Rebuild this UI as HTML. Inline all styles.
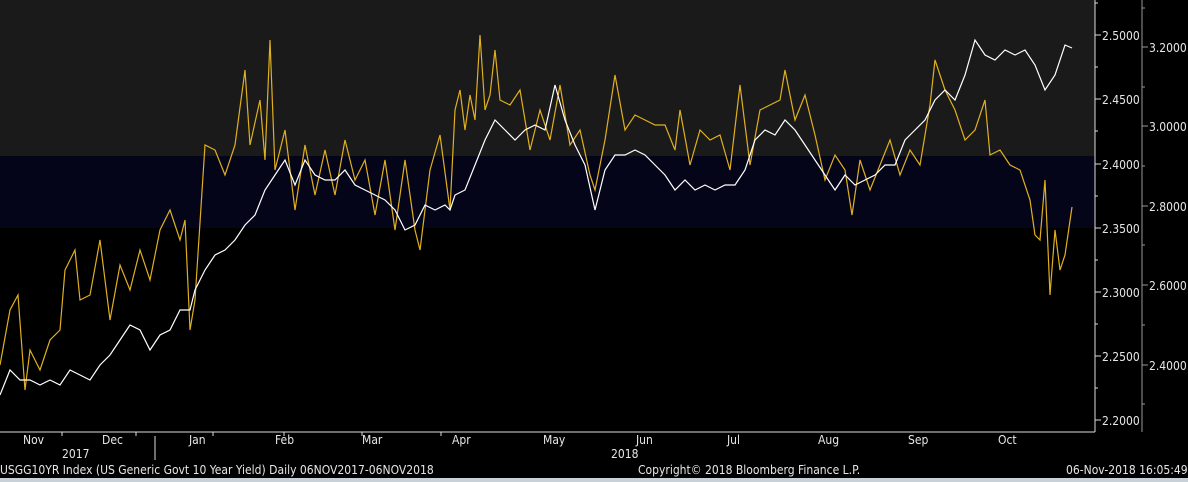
<!DOCTYPE html>
<html><head><meta charset="utf-8"><style>
body{margin:0;width:1188px;height:482px;background:#000;overflow:hidden;font-family:"DejaVu Sans Condensed","Liberation Sans",sans-serif;}
svg{display:block}
text{fill:#e6e6e6;font-size:12px;font-family:"DejaVu Sans Condensed","Liberation Sans",sans-serif;font-stretch:condensed}
</style></head><body>
<svg width="1188" height="482" viewBox="0 0 1188 482">
<rect x="0" y="0" width="1188" height="482" fill="#000"/>
<rect x="0" y="0" width="1095" height="156" fill="#1a1a1a"/>
<rect x="0" y="156" width="1095" height="72" fill="#05051a"/>
<!-- left axis -->
<line x1="1095" y1="0" x2="1095" y2="432" stroke="#ddd" stroke-width="1"/>
<line x1="0" y1="432" x2="1095" y2="432" stroke="#ddd"/>
<g stroke="#ddd">
<line x1="1095" y1="35" x2="1101" y2="35"/><line x1="1095" y1="99" x2="1101" y2="99"/><line x1="1095" y1="164" x2="1101" y2="164"/><line x1="1095" y1="228" x2="1101" y2="228"/><line x1="1095" y1="292" x2="1101" y2="292"/><line x1="1095" y1="356" x2="1101" y2="356"/><line x1="1095" y1="420" x2="1101" y2="420"/>
<line x1="1095" y1="3" x2="1098" y2="3"/><line x1="1095" y1="67" x2="1098" y2="67"/><line x1="1095" y1="131" x2="1098" y2="131"/><line x1="1095" y1="196" x2="1098" y2="196"/><line x1="1095" y1="260" x2="1098" y2="260"/><line x1="1095" y1="324" x2="1098" y2="324"/><line x1="1095" y1="388" x2="1098" y2="388"/>
</g>
<g><text x="1102" y="40">2.5000</text><text x="1102" y="104">2.4500</text><text x="1102" y="169">2.4000</text><text x="1102" y="233">2.3500</text><text x="1102" y="297">2.3000</text><text x="1102" y="361">2.2500</text><text x="1102" y="425">2.2000</text></g>
<!-- right axis -->
<line x1="1142" y1="0" x2="1142" y2="432" stroke="#999"/>
<g stroke="#999">
<line x1="1142" y1="47" x2="1148" y2="47"/><line x1="1142" y1="126" x2="1148" y2="126"/><line x1="1142" y1="206" x2="1148" y2="206"/><line x1="1142" y1="285" x2="1148" y2="285"/><line x1="1142" y1="365" x2="1148" y2="365"/>
<line x1="1142" y1="8" x2="1145" y2="8"/><line x1="1142" y1="87" x2="1145" y2="87"/><line x1="1142" y1="166" x2="1145" y2="166"/><line x1="1142" y1="245" x2="1145" y2="245"/><line x1="1142" y1="325" x2="1145" y2="325"/><line x1="1142" y1="404" x2="1145" y2="404"/>
</g>
<g><text x="1149" y="52">3.2000</text><text x="1149" y="131">3.0000</text><text x="1149" y="211">2.8000</text><text x="1149" y="290">2.6000</text><text x="1149" y="370">2.4000</text></g>
<!-- x axis ticks & labels -->
<g stroke="#ddd"><line x1="62" y1="432" x2="62" y2="436"/><line x1="136" y1="432" x2="136" y2="436"/><line x1="213" y1="432" x2="213" y2="436"/><line x1="284" y1="432" x2="284" y2="436"/><line x1="362" y1="432" x2="362" y2="436"/><line x1="441" y1="432" x2="441" y2="436"/><line x1="155" y1="436" x2="155" y2="460"/></g>
<g><text x="23" y="444">Nov</text><text x="102" y="444">Dec</text><text x="189" y="444">Jan</text><text x="275" y="444">Feb</text><text x="362" y="444">Mar</text><text x="452" y="444">Apr</text><text x="543" y="444">May</text><text x="636" y="444">Jun</text><text x="727" y="444">Jul</text><text x="818" y="444">Aug</text><text x="908" y="444">Sep</text><text x="998" y="444">Oct</text>
<text x="62" y="458">2017</text><text x="611" y="458">2018</text>
<text x="0" y="474">USGG10YR Index (US Generic Govt 10 Year Yield)  Daily 06NOV2017-06NOV2018</text>
<text x="638" y="474">Copyright© 2018 Bloomberg Finance L.P.</text>
<text x="1066" y="474">06-Nov-2018 16:05:49</text></g>
<rect x="0" y="478" width="1188" height="4" fill="#c8d0d8"/>
<polyline fill="none" stroke="#e0b020" stroke-width="1.2" points="0,365 10,310 18,295 25,390 30,350 40,370 50,340 60,330 65,270 75,250 80,300 90,295 100,240 110,320 120,265 130,290 140,250 150,280 160,230 170,210 180,240 185,220 190,330 195,300 205,145 215,150 225,175 235,145 245,70 250,145 260,100 265,160 270,40 275,170 285,130 295,210 305,145 315,195 325,150 335,195 345,140 355,180 365,160 375,215 385,160 395,230 405,160 415,230 420,250 430,170 440,135 450,210 455,110 460,90 465,130 470,95 475,120 480,35 485,110 490,95 495,50 500,100 510,105 520,90 530,150 540,110 550,140 560,85 570,145 580,130 590,175 595,190 605,140 615,75 625,130 635,115 645,120 655,125 665,125 675,150 680,110 690,165 700,130 710,140 720,135 730,170 740,85 750,165 760,110 770,105 780,100 785,70 795,120 805,95 815,135 825,180 835,155 845,170 852,215 860,160 870,190 880,165 890,140 900,175 910,150 920,165 930,105 935,60 945,90 955,110 965,140 975,130 985,100 990,155 1000,150 1010,165 1020,170 1030,200 1035,235 1040,240 1045,180 1050,295 1055,230 1060,270 1065,255 1072,207"/>
<polyline fill="none" stroke="#ffffff" stroke-width="1.2" points="0,395 10,370 20,380 30,380 40,385 50,380 60,385 70,370 80,375 90,380 100,365 110,355 120,340 130,325 140,330 150,350 160,335 170,330 180,310 190,310 195,290 205,270 215,255 225,250 235,240 245,225 255,215 265,190 275,175 285,160 295,185 305,160 315,175 325,180 335,180 345,170 355,185 365,190 375,195 385,200 395,210 405,230 415,225 425,205 435,210 445,205 450,210 455,195 465,190 475,165 485,140 495,120 505,130 515,140 525,130 535,125 545,130 555,85 565,120 575,145 585,165 595,210 605,170 615,155 625,155 635,150 645,155 655,165 665,175 675,190 685,180 695,190 705,185 715,190 725,185 735,185 745,170 755,140 765,130 775,135 785,120 795,130 805,145 815,160 825,175 835,190 845,175 855,185 865,180 875,175 885,165 895,165 905,140 915,130 925,120 935,100 945,90 955,100 965,75 975,40 985,55 995,60 1005,50 1015,55 1025,50 1035,65 1045,90 1055,75 1065,45 1072,48"/>
</svg>
</body></html>
